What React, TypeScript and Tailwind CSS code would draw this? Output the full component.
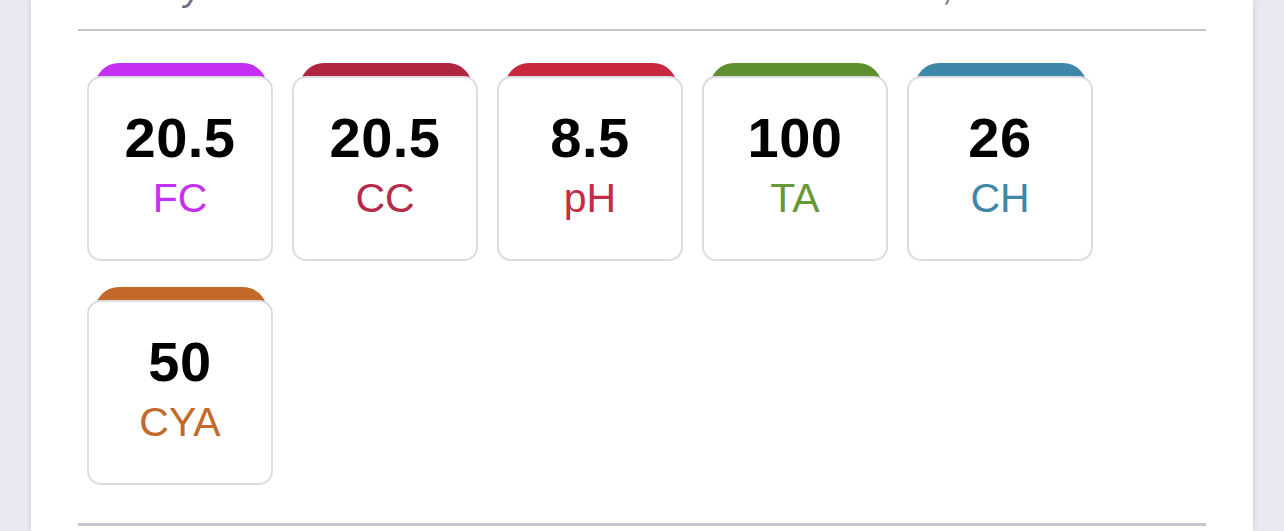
import React from "react";

type Tile = { value: string; label: string; tab: string; text: string };

const row1: Tile[] = [
  { value: "20.5", label: "FC", tab: "bg-[#c52ff3]", text: "text-[#c530f0]" },
  { value: "20.5", label: "CC", tab: "bg-[#b0253f]", text: "text-[#b52c4a]" },
  { value: "8.5", label: "pH", tab: "bg-[#c8293f]", text: "text-[#c52c48]" },
  { value: "100", label: "TA", tab: "bg-[#5f8f2f]", text: "text-[#679836]" },
  { value: "26", label: "CH", tab: "bg-[#3e87a8]", text: "text-[#3f87a8]" },
];
const row2: Tile[] = [
  { value: "50", label: "CYA", tab: "bg-[#c2692a]", text: "text-[#c2692b]" },
];

function TileCard({ t }: { t: Tile }) {
  return (
    <div className="relative w-[186px] pt-[13px]">
      <div className={`absolute top-0 left-[8px] right-[6px] h-[40px] rounded-t-[24px] ${t.tab}`} />
      <div className="relative h-[185px] rounded-[14px] border-2 border-[#dcdce5] bg-white flex flex-col items-center pt-[32px]">
        <div className="text-[56px] leading-none font-bold text-black tracking-[0.5px]">{t.value}</div>
        <div className={`mt-[12px] text-[41px] leading-none ${t.text}`}>{t.label}</div>
      </div>
    </div>
  );
}

export default function App() {
  return (
    <div
      className="w-[1284px] h-[531px] overflow-hidden bg-[#e9e9f3] flex"
      style={{ fontFamily: '"Liberation Sans", Arial, sans-serif' }}
    >
      <div className="ml-[31px] w-[1222px] h-full bg-white shadow-[0_0_6px_rgba(60,60,90,0.18)] px-[47px] flex flex-col">
        <div className="h-[29px] overflow-hidden">
          <div className="-mt-[30px] flex text-[36px] leading-none italic text-[#6c6983]">
            <span className="ml-[106px]">y</span>
            <span className="ml-[742px]">,</span>
          </div>
        </div>
        <div className="h-[2px] bg-[#c6c6cc]" />
        <div className="mt-[32px] ml-[9px] flex flex-col gap-[26px]">
          <div className="flex gap-[19px]">
            {row1.map((t, i) => (
              <TileCard key={i} t={t} />
            ))}
          </div>
          <div className="flex gap-[19px]">
            {row2.map((t, i) => (
              <TileCard key={i} t={t} />
            ))}
          </div>
        </div>
        <div className="mt-[38px] h-[3px] bg-[#c6c6cc]" />
      </div>
    </div>
  );
}
